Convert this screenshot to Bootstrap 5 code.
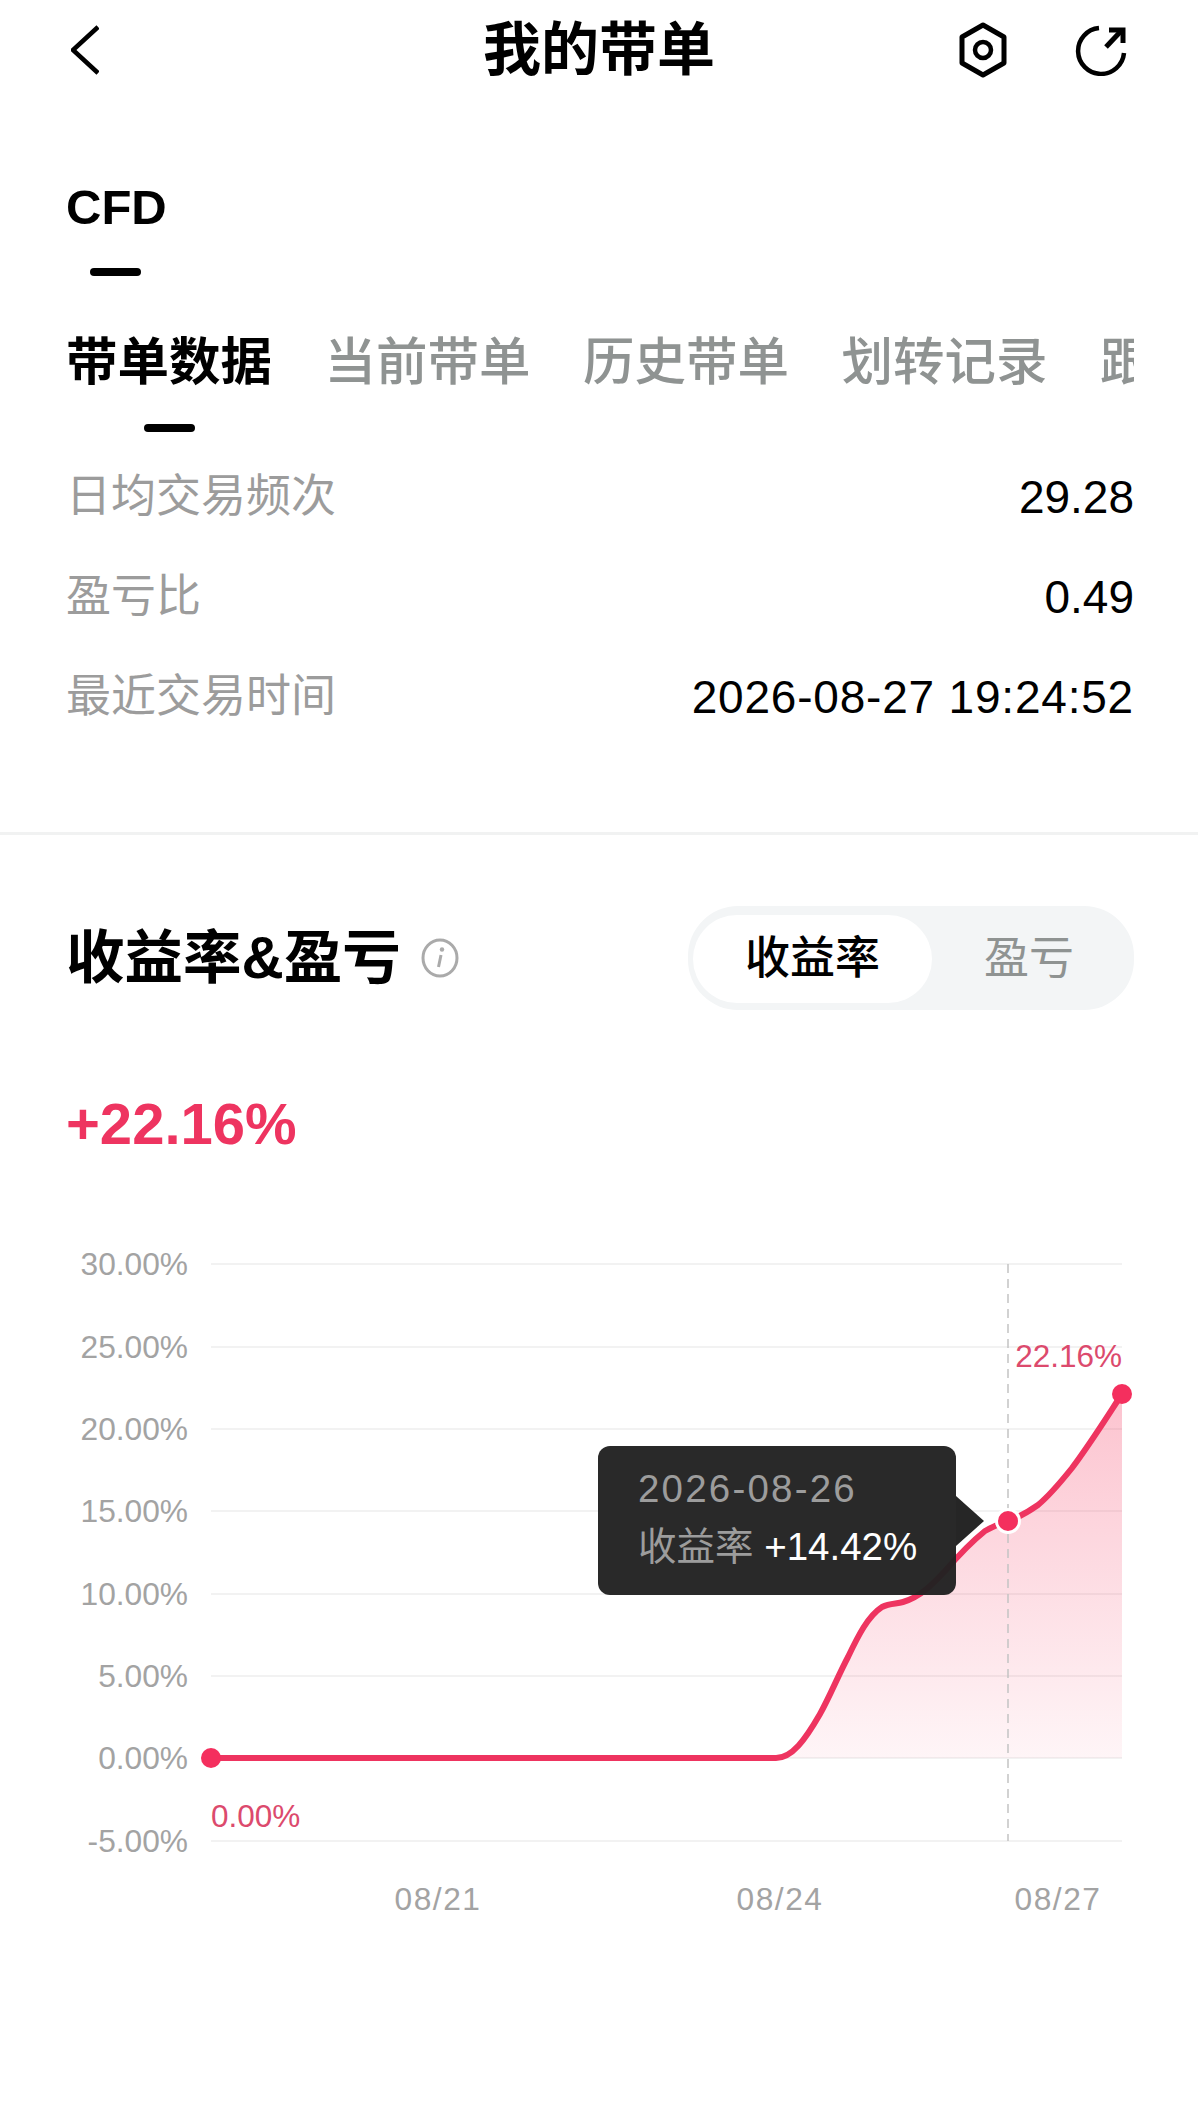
<!DOCTYPE html>
<html lang="zh">
<head>
    <meta charset="utf-8">
    <title>我的带单</title>
    <link href="https://cdn.jsdelivr.net/npm/bootstrap@5.3.3/dist/css/bootstrap.min.css" rel="stylesheet">
    <script src="https://cdn.jsdelivr.net/npm/bootstrap@5.3.3/dist/js/bootstrap.bundle.min.js"></script>
    <style>
        html, body { background: #fff; }
        body {
            width: 1198px;
            min-height: 2105px;
            font-family: "Liberation Sans", "Noto Sans CJK SC", sans-serif;
            color: #000;
            overflow-x: hidden;
        }
        .top-bar { height: 100px; padding: 0 71px; }
        .top-side { flex: 1 1 0; }
        .icon-gap { gap: 67px; }
        .top-title { font-size: 58px; font-weight: 700; line-height: 70px; }
        .page-pad { padding-left: 66px; padding-right: 64px; }
        .group-name { font-size: 49px; font-weight: 700; line-height: 60px; margin-top: 77px; }
        .tick-mark { height: 8px; width: 51px; background: #000; border-radius: 4px; }
        .tick-a { margin: 31px 0 0 24px; }
        .tick-b { margin: 30px 0 0 78px; }
        .tab-strip { margin-top: 54px; gap: 52.5px; overflow: hidden; flex-wrap: nowrap; }
        .tab-link { font-size: 51.5px; line-height: 64px; color: #8f9392; white-space: nowrap; font-weight: 500; flex: none; }
        .tab-link.on { color: #000; font-weight: 700; }
        .stat-list { margin-top: 15px; }
        .stat-line { height: 100px; }
        .stat-key { font-size: 45px; color: #9c9c9c; }
        .stat-val { font-size: 46px; }
        .stat-time { letter-spacing: .8px; }
        .split-line { height: 3px; background: #f1f2f2; margin-top: 85px; }
        .section-head { margin-top: 71px; }
        .section-title { font-size: 58.5px; font-weight: 700; line-height: 70px; }
        .info-gap { gap: 20px; }
        .switch-box { width: 446px; height: 104px; background: #f3f5f6; border-radius: 50px; padding: 9px 0 7px 5px; }
        .switch-on, .switch-off { font-size: 45px; line-height: 88px; text-align: center; }
        .switch-on { width: 239px; background: #fff; border-radius: 44px; font-weight: 500; }
        .switch-off { flex: 1; color: #8f9392; padding-right: 8px; }
        .gain-value { font-size: 58px; font-weight: 700; line-height: 70px; color: #ee3460; margin-top: 79px; }
        .chart-wrap { margin-top: 81px; height: 760px; }
        .chart-wrap svg { display: block; }
        .axis-y, .axis-x { fill: #a3a3a3; font-size: 31.7px; }
        .axis-x { letter-spacing: 1.5px; }
        .end-tag { fill: #dc4a6d; font-size: 31.5px; }
        .tip-box {
            left: 598px;
            top: 206px;
            width: 358px;
            height: 149px;
            background: rgba(34, 34, 34, .97);
            border-radius: 12px;
            padding: 14px 0 0 40px;
            color: #9c9c9c;
            font-size: 38.5px;
            line-height: 58px;
        }
        .tip-box::after {
            content: "";
            position: absolute;
            left: 100%;
            top: 50px;
            border-style: solid;
            border-width: 25px 0 25px 28px;
            border-color: transparent transparent transparent #262626;
        }
        .tip-date { letter-spacing: 2.2px; }
        .tip-num { color: #fff; }
    </style>
</head>
<body>
    <header class="top-bar d-flex align-items-center">
        <div class="top-side d-flex">
            <svg width="28" height="50" viewBox="0 0 28 50"><polyline points="27,2 2,25 27,48" fill="none" stroke="#000" stroke-width="4.5"/></svg>
        </div>
        <div class="top-title">我的带单</div>
        <div class="top-side d-flex justify-content-end align-items-center icon-gap">
            <svg width="50" height="56" viewBox="0 0 50 56">
                <polygon points="25,3 46,15 46,41 25,53 4,41 4,15" fill="none" stroke="#000" stroke-width="5" stroke-linejoin="round"/>
                <circle cx="25" cy="28" r="8" fill="none" stroke="#000" stroke-width="4.5"/>
            </svg>
            <svg width="52" height="52" viewBox="0 0 52 52">
                <path d="M24 4 A23 23 0 1 0 49 29" fill="none" stroke="#000" stroke-width="4.5"/>
                <path d="M31 23 L47 6" fill="none" stroke="#000" stroke-width="5"/>
                <path d="M34 6 H48 V19" fill="none" stroke="#000" stroke-width="5"/>
            </svg>
        </div>
    </header>

    <div class="page-pad">
        <div class="group-name">CFD</div>
        <div class="tick-mark tick-a"></div>

        <nav class="tab-strip d-flex">
            <span class="tab-link on">带单数据</span>
            <span class="tab-link">当前带单</span>
            <span class="tab-link">历史带单</span>
            <span class="tab-link">划转记录</span>
            <span class="tab-link">跟单用户</span>
        </nav>
        <div class="tick-mark tick-b"></div>

        <div class="stat-list">
            <div class="stat-line d-flex justify-content-between align-items-center">
                <span class="stat-key">日均交易频次</span><span class="stat-val">29.28</span>
            </div>
            <div class="stat-line d-flex justify-content-between align-items-center">
                <span class="stat-key">盈亏比</span><span class="stat-val">0.49</span>
            </div>
            <div class="stat-line d-flex justify-content-between align-items-center">
                <span class="stat-key">最近交易时间</span><span class="stat-val stat-time">2026-08-27 19:24:52</span>
            </div>
        </div>
    </div>

    <div class="split-line"></div>

    <div class="page-pad">
        <div class="section-head d-flex justify-content-between align-items-center">
            <div class="d-flex align-items-center info-gap">
                <span class="section-title">收益率&amp;盈亏</span>
                <svg width="38" height="40" viewBox="0 0 38 40">
                    <ellipse cx="19" cy="20" rx="17" ry="18" fill="none" stroke="#aaa" stroke-width="3"/>
                    <circle cx="21" cy="11.5" r="2.2" fill="#aaa"/>
                    <path d="M20 17 L17.5 29" fill="none" stroke="#aaa" stroke-width="3"/>
                </svg>
            </div>
            <div class="switch-box d-flex">
                <div class="switch-on">收益率</div>
                <div class="switch-off">盈亏</div>
            </div>
        </div>
        <div class="gain-value">+22.16%</div>
    </div>

    <div class="chart-wrap position-relative">
        <svg width="1198" height="760" viewBox="0 1240 1198 760">
            <defs>
                <linearGradient id="areaFade" x1="0" y1="1394" x2="0" y2="1758" gradientUnits="userSpaceOnUse">
                    <stop offset="0" stop-color="#f5385f" stop-opacity=".3"/>
                    <stop offset="1" stop-color="#f5385f" stop-opacity=".05"/>
                </linearGradient>
            </defs>
            <g stroke="#f2f2f2" stroke-width="2">
                <line x1="211" x2="1122" y1="1264" y2="1264"/>
                <line x1="211" x2="1122" y1="1347" y2="1347"/>
                <line x1="211" x2="1122" y1="1429" y2="1429"/>
                <line x1="211" x2="1122" y1="1511" y2="1511"/>
                <line x1="211" x2="1122" y1="1594" y2="1594"/>
                <line x1="211" x2="1122" y1="1676" y2="1676"/>
                <line x1="211" x2="1122" y1="1758" y2="1758"/>
                <line x1="211" x2="1122" y1="1841" y2="1841"/>
            </g>
            <g class="axis-y" text-anchor="end">
                <text x="188" y="1275">30.00%</text>
                <text x="188" y="1358">25.00%</text>
                <text x="188" y="1440">20.00%</text>
                <text x="188" y="1522">15.00%</text>
                <text x="188" y="1605">10.00%</text>
                <text x="188" y="1687">5.00%</text>
                <text x="188" y="1769">0.00%</text>
                <text x="188" y="1852">-5.00%</text>
            </g>
            <g class="axis-x" text-anchor="middle">
                <text x="438" y="1910">08/21</text>
                <text x="780" y="1910">08/24</text>
                <text x="1058" y="1910">08/27</text>
            </g>
            <path d="M776 1758 C792 1758 805 1740 820 1714 C830 1696 838 1676 848 1657 C858 1636 868 1616 882 1607 C890 1603 896 1604 903 1602 C920 1597 932 1585 945 1571 C958 1556 970 1543 985 1531 C994 1526 1001 1523 1008 1521 C1020 1517 1028 1512 1038 1505 C1050 1495 1060 1483 1072 1468 C1090 1444 1105 1420 1122 1394 V1758 Z" fill="url(#areaFade)"/>
            <line x1="1008" x2="1008" y1="1264" y2="1841" stroke="#c4c4c4" stroke-width="1.5" stroke-dasharray="9 6"/>
            <path d="M211 1758 H776 C792 1758 805 1740 820 1714 C830 1696 838 1676 848 1657 C858 1636 868 1616 882 1607 C890 1603 896 1604 903 1602 C920 1597 932 1585 945 1571 C958 1556 970 1543 985 1531 C994 1526 1001 1523 1008 1521 C1020 1517 1028 1512 1038 1505 C1050 1495 1060 1483 1072 1468 C1090 1444 1105 1420 1122 1394" fill="none" stroke="#ee3460" stroke-width="6" stroke-linecap="round"/>
            <circle cx="211" cy="1758" r="10" fill="#f42f5e"/>
            <circle cx="1122" cy="1394" r="10" fill="#f42f5e"/>
            <circle cx="1008" cy="1521" r="11.5" fill="#f42f5e" stroke="#fff" stroke-width="3"/>
            <text class="end-tag" x="1122" y="1367" text-anchor="end">22.16%</text>
            <text class="end-tag" x="211" y="1827">0.00%</text>
        </svg>

        <div class="tip-box position-absolute">
            <div class="tip-date">2026-08-26</div>
            <div>收益率 <span class="tip-num">+14.42%</span></div>
        </div>
    </div>
</body>
</html>
